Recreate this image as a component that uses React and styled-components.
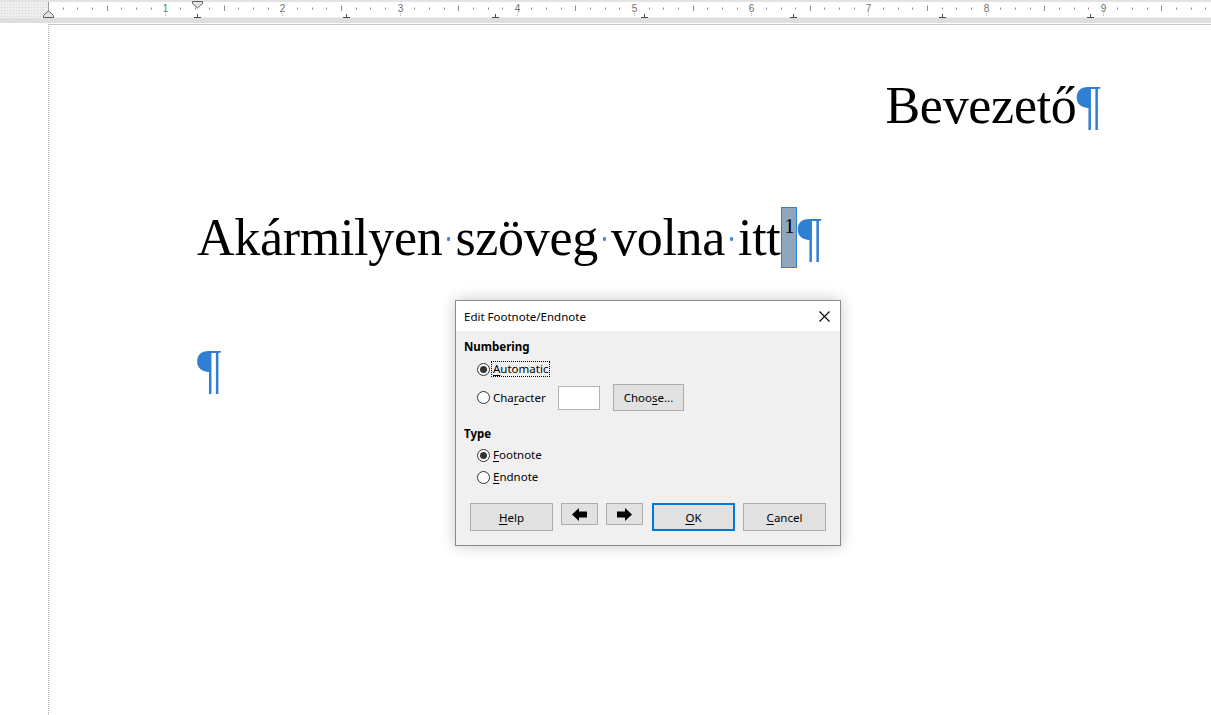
import React from "react";
import styled, { createGlobalStyle } from "styled-components";

const GlobalStyle = createGlobalStyle`
  html, body { margin: 0; padding: 0; background: #ffffff; }
  body { overflow: hidden; }
`;

const Root = styled.div`
  position: relative;
  width: 1211px;
  height: 715px;
  overflow: hidden;
  background: #ffffff;
`;

const RulerBar = styled.div`
  height: 24px;
  background: #ffffff;
  svg { display: block; }
`;

const Workspace = styled.div`
  display: flex;
  height: 691px;
`;

const Gutter = styled.div`
  width: 48px;
  flex: none;
`;

const Page = styled.div`
  flex: 1;
  border-left: 1px dotted #b0b0b0;
  border-top: 1px solid #c9c9c9;
  padding: 50px 110px 0 148px;
  font-family: "Liberation Serif", "Times New Roman", serif;
  font-size: 52px;
  color: #000;
`;

const Para = styled.div`
  height: 60px;
  line-height: 60px;
  white-space: nowrap;
  letter-spacing: -0.3px;
  margin-top: ${(p) => p.$gap || 0}px;
  text-align: ${(p) => p.$align || "left"};
`;

const Pilcrow = styled.span`
  color: #2f7fd2;
  letter-spacing: 0;
  font-size: 54px;
`;

const Space = styled.span`
  display: inline-block;
  width: 0.25em;
  height: 4px;
  vertical-align: 0.27em;
  background: radial-gradient(circle at center, #3a88d8 0 1.7px, transparent 2px) no-repeat;
`;

const Anchor = styled.span`
  display: inline-block;
  box-sizing: border-box;
  width: 16px;
  height: 61px;
  vertical-align: top;
  margin-left: 1px;
  background: #8fa7be;
  border: 1px solid #2d7fd0;
  font-size: 21px;
  line-height: 21px;
  padding-top: 8px;
  text-align: center;
  letter-spacing: 0;
`;

/* ---------- Dialog ---------- */

const Dialog = styled.div`
  position: absolute;
  left: 455px;
  top: 300px;
  width: 386px;
  height: 246px;
  box-sizing: border-box;
  border: 1px solid #8a8a8a;
  background: #f0f0f0;
  box-shadow: 0 0 14px rgba(0, 0, 0, 0.22);
  font-family: "Noto Sans", "Open Sans", sans-serif;
  font-size: 12px;
  color: #000;
  display: flex;
  flex-direction: column;
`;

const TitleBar = styled.div`
  height: 30px;
  background: #ffffff;
  display: flex;
  align-items: center;
  justify-content: space-between;
  padding: 0 10px 0 8px;
  flex: none;
`;

const Title = styled.span`
  font-size: 11.5px;
`;

const Body = styled.div`
  flex: 1;
  padding: 8px 14px 0 8px;
  display: flex;
  flex-direction: column;
`;

const Section = styled.div`
  font-weight: 700;
  line-height: 16px;
  height: 16px;
  margin-top: ${(p) => p.$gap || 0}px;
  font-size: 11.5px;
`;

const Row = styled.div`
  display: flex;
  align-items: center;
  height: ${(p) => p.$h || 16}px;
  margin-top: ${(p) => p.$gap || 0}px;
  padding-left: 13px;
  line-height: 16px;
  font-size: 11.5px;
`;

const Radio = styled.span`
  box-sizing: border-box;
  width: 13px;
  height: 13px;
  border-radius: 50%;
  border: 1px solid #333;
  background: #fff;
  display: flex;
  align-items: center;
  justify-content: center;
  flex: none;
  margin-right: 1px;
  &::after {
    content: "";
    width: 7px;
    height: 7px;
    border-radius: 50%;
    background: #333;
    display: ${(p) => (p.$on ? "block" : "none")};
  }
`;

const Label = styled.span`
  padding: 0 1px;
  border: 1px dotted ${(p) => (p.$focus ? "#000" : "transparent")};
  line-height: 14px;
  width: ${(p) => (p.$w ? `${p.$w}px` : "auto")};
  box-sizing: border-box;
  flex: none;
`;

const U = styled.span`
  text-decoration: underline;
  text-underline-offset: 2px;
`;

const TextBox = styled.span`
  box-sizing: border-box;
  width: 42px;
  height: 24px;
  background: #fff;
  border: 1px solid #b3b3b3;
  flex: none;
`;

const Button = styled.button`
  box-sizing: border-box;
  width: ${(p) => p.$w || 83}px;
  height: ${(p) => p.$h || 28}px;
  margin-left: ${(p) => p.$ml || 0}px;
  background: #e1e1e1;
  border: ${(p) => (p.$primary ? "2px solid #0078d7" : "1px solid #adadad")};
  font-family: "Noto Sans", "Open Sans", sans-serif;
  font-size: 11.5px;
  color: #000;
  padding: 0;
  display: flex;
  align-items: center;
  justify-content: center;
  flex: none;
  align-self: flex-start;
`;

const ButtonRow = styled.div`
  display: flex;
  margin-top: 18px;
  padding-left: 6px;
`;

function Ruler() {
  const origin = 48;
  const inch = 117.2;
  const ticks = [];
  for (let i = 1; origin + (i * inch) / 8 < 1211; i++) {
    const x = Math.round(origin + (i * inch) / 8) + 0.5;
    if (i % 8 === 0) {
      ticks.push(
        <text key={"n" + i} x={x} y={12} fontSize="10" textAnchor="middle" fill="#6f6f6f" fontFamily="Liberation Sans, Arial, sans-serif">
          {i / 8}
        </text>
      );
      ticks.push(<line key={"l" + i} x1={x} x2={x} y1={13} y2={17} stroke="#b5b5b5" strokeDasharray="1 1" />);
    } else if (i % 4 === 0) {
      ticks.push(<line key={"t" + i} x1={x} x2={x} y1={5.5} y2={11} stroke="#8a8a8a" />);
    } else {
      ticks.push(<line key={"t" + i} x1={x} x2={x} y1={7.5} y2={9.5} stroke="#8a8a8a" />);
    }
  }
  const tabs = [];
  for (let j = 0; j < 7; j++) {
    const x = Math.round(197 + j * 148.9) + 0.5;
    tabs.push(
      <g key={"tab" + j} stroke="#4a4a4a">
        <line x1={x} x2={x} y1={14} y2={18} />
        <line x1={x - 3.5} x2={x + 3.5} y1={17.5} y2={17.5} />
      </g>
    );
  }
  return (
    <svg width="1211" height="24" viewBox="0 0 1211 24">
      <defs>
        <pattern id="dots" width="3" height="3" patternUnits="userSpaceOnUse">
          <rect width="3" height="3" fill="#eeeeee" />
          <rect x="1" y="1" width="1" height="1" fill="#d2d2d2" />
        </pattern>
      </defs>
      <rect x="0" y="0" width="1211" height="2" fill="#e3e3e3" />
      <rect x="0" y="17.5" width="1211" height="5.5" fill="#dedede" />
      <rect x="0" y="2" width="48" height="15.5" fill="url(#dots)" />
      <line x1="48.5" x2="48.5" y1="2" y2="17" stroke="#9a9a9a" />
      {ticks}
      {tabs}
      <path d="M43.5 17.5 L43.5 15.5 L48.5 11 L53.5 15.5 L53.5 17.5 Z" fill="#e6e6e6" stroke="#5e5e5e" />
      <path d="M192.5 1.5 L202.5 1.5 L202.5 3.5 L197.5 8 L192.5 3.5 Z" fill="#e6e6e6" stroke="#5e5e5e" />
    </svg>
  );
}

function CloseIcon() {
  return (
    <svg width="11" height="11" viewBox="0 0 11 11">
      <path d="M0.5 0.5 L10.5 10.5 M10.5 0.5 L0.5 10.5" stroke="#000" strokeWidth="1.1" />
    </svg>
  );
}

function Arrow({ dir }) {
  const pts = dir === "left" ? "0,6.5 7,0 7,3.5 15,3.5 15,9.5 7,9.5 7,13" : "15,6.5 8,0 8,3.5 0,3.5 0,9.5 8,9.5 8,13";
  return (
    <svg width="15" height="13" viewBox="0 0 15 13">
      <polygon points={pts} fill="#000" />
    </svg>
  );
}

export default function App() {
  return (
    <Root>
      <GlobalStyle />
      <RulerBar>
        <Ruler />
      </RulerBar>
      <Workspace>
        <Gutter />
        <Page>
          <Para $align="right">
            Bevezető<Pilcrow>¶</Pilcrow>
          </Para>
          <Para $gap={72}>
            Akármilyen<Space />szöveg<Space />volna<Space />itt<Anchor>1</Anchor>
            <Pilcrow>¶</Pilcrow>
          </Para>
          <Para $gap={72}>
            <Pilcrow>¶</Pilcrow>
          </Para>
        </Page>
      </Workspace>

      <Dialog>
        <TitleBar>
          <Title>Edit Footnote/Endnote</Title>
          <CloseIcon />
        </TitleBar>
        <Body>
          <Section>Numbering</Section>
          <Row $gap={6}>
            <Radio $on />
            <Label $focus>
              <U>A</U>utomatic
            </Label>
          </Row>
          <Row $gap={7} $h={27}>
            <Radio />
            <Label $w={67}>
              Cha<U>r</U>acter
            </Label>
            <TextBox />
            <Button $w={71} $h={27} $ml={13}>
              Choo<U>s</U>e...
            </Button>
          </Row>
          <Section $gap={15}>Type</Section>
          <Row $gap={5}>
            <Radio $on />
            <Label>
              <U>F</U>ootnote
            </Label>
          </Row>
          <Row $gap={6}>
            <Radio />
            <Label>
              <U>E</U>ndnote
            </Label>
          </Row>
          <ButtonRow>
            <Button>
              <U>H</U>elp
            </Button>
            <Button $w={37} $h={22} $ml={8}>
              <Arrow dir="left" />
            </Button>
            <Button $w={37} $h={22} $ml={8}>
              <Arrow dir="right" />
            </Button>
            <Button $primary $ml={9}>
              <U>O</U>K
            </Button>
            <Button $ml={8}>
              <U>C</U>ancel
            </Button>
          </ButtonRow>
        </Body>
      </Dialog>
    </Root>
  );
}
